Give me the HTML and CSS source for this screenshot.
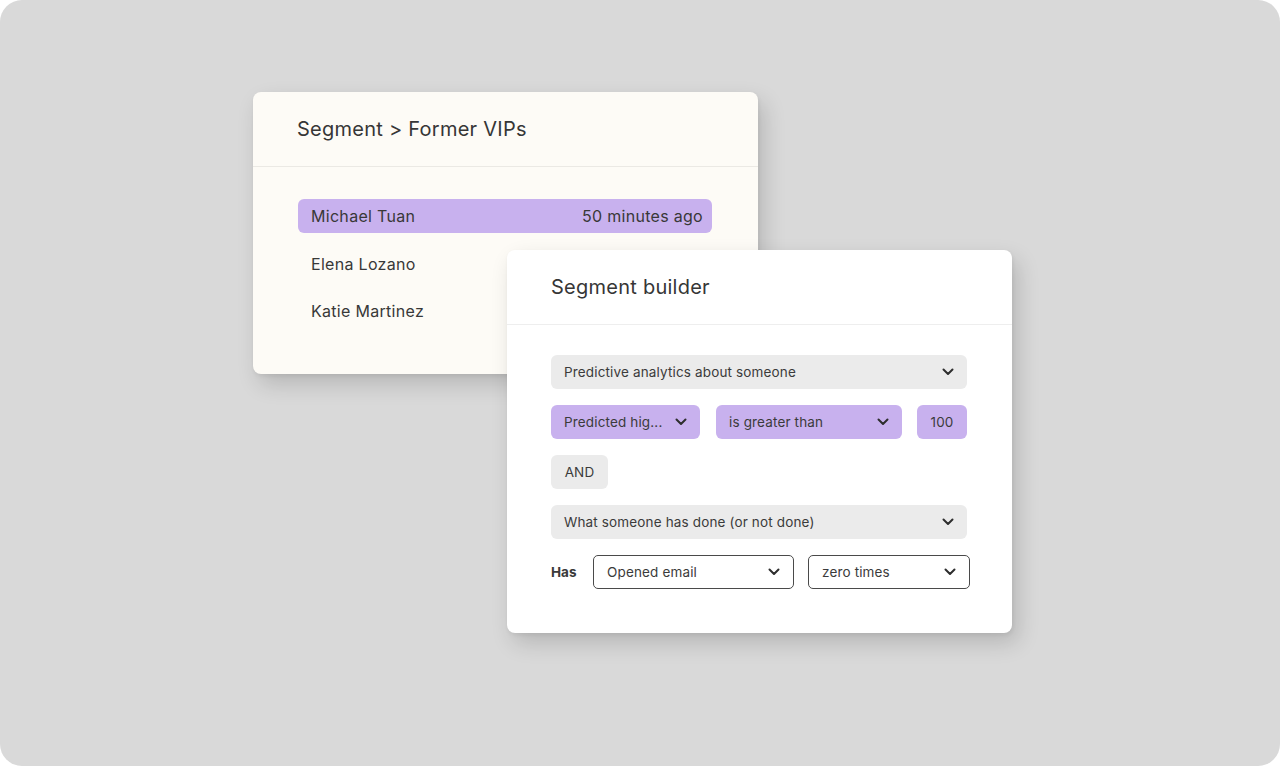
FILE: index.html
```html
<!DOCTYPE html>
<html lang="en">
<head>
<meta charset="utf-8">
<title>Segment builder</title>
<link rel="stylesheet" href="styles.css">
</head>
<body>
<div class="stage">
  <section class="card card-list">
    <header class="card-head">Segment &gt; Former VIPs</header>
    <ul class="people">
      <li class="person active"><span>Michael Tuan</span><span>50 minutes ago</span></li>
      <li class="person"><span>Elena Lozano</span></li>
      <li class="person"><span>Katie Martinez</span></li>
    </ul>
  </section>

  <section class="card card-builder">
    <header class="card-head">Segment builder</header>
    <div class="builder">
      <div class="field gray full"><span>Predictive analytics about someone</span><svg class="chev" viewBox="0 0 12 8"><path d="M1.5 1.5l4.5 4.5 4.5-4.5"/></svg></div>
      <div class="row">
        <div class="field purple w149"><span>Predicted hig...</span><svg class="chev" viewBox="0 0 12 8"><path d="M1.5 1.5l4.5 4.5 4.5-4.5"/></svg></div>
        <div class="field purple w186"><span>is greater than</span><svg class="chev" viewBox="0 0 12 8"><path d="M1.5 1.5l4.5 4.5 4.5-4.5"/></svg></div>
        <div class="field purple num"><span>100</span></div>
      </div>
      <div class="field gray and"><span>AND</span></div>
      <div class="field gray full"><span>What someone has done (or not done)</span><svg class="chev" viewBox="0 0 12 8"><path d="M1.5 1.5l4.5 4.5 4.5-4.5"/></svg></div>
      <div class="row has-row">
        <span class="has">Has</span>
        <div class="field outline w200"><span>Opened email</span><svg class="chev" viewBox="0 0 12 8"><path d="M1.5 1.5l4.5 4.5 4.5-4.5"/></svg></div>
        <div class="field outline w162"><span>zero times</span><svg class="chev" viewBox="0 0 12 8"><path d="M1.5 1.5l4.5 4.5 4.5-4.5"/></svg></div>
      </div>
    </div>
  </section>
</div>
</body>
</html>
```

FILE: styles.css
```css
* { box-sizing: border-box; }
html, body { margin: 0; padding: 0; background: #ffffff; }
body {
  font-family: Inter, "Noto Sans", "Liberation Sans", sans-serif;
  color: #353535;
}
.stage {
  position: relative;
  width: 1280px;
  height: 766px;
  background: #d9d9d9;
  border-radius: 22px;
  overflow: hidden;
}
.card {
  position: absolute;
  width: 505px;
  border-radius: 8px;
  box-shadow: 6px 10px 22px rgba(0, 0, 0, 0.16), 1px 2px 4px rgba(0, 0, 0, 0.06);
  display: flex;
  flex-direction: column;
}
.card-list {
  left: 253px;
  top: 92px;
  height: 282px;
  background: #fdfbf6;
}
.card-builder {
  left: 507px;
  top: 250px;
  height: 383px;
  background: #ffffff;
}
.card-head {
  height: 75px;
  display: flex;
  align-items: center;
  padding-left: 44px;
  font-size: 20px;
  letter-spacing: 0.25px;
  color: #363636;
  border-bottom: 1px solid #ebe9e4;
}
.card-builder .card-head { border-bottom-color: #eeeeee; }
.people {
  list-style: none;
  margin: 0;
  padding: 32px 0 0 45px;
  display: flex;
  flex-direction: column;
  gap: 13.5px;
}
.person {
  width: 414px;
  height: 34px;
  border-radius: 6px;
  display: flex;
  align-items: center;
  justify-content: space-between;
  padding: 0 9px 0 13px;
  font-size: 16px;
  letter-spacing: 0.3px;
  color: #383838;
}
.person.active { background: #c8b1ee; }
.builder {
  padding: 30px 0 0 44px;
  display: flex;
  flex-direction: column;
  gap: 16px;
}
.row {
  display: flex;
  align-items: center;
  gap: 15px;
}
.row .w186 { margin-left: 1px; }
.field {
  height: 34px;
  border-radius: 6px;
  display: flex;
  align-items: center;
  justify-content: space-between;
  padding: 0 13px;
  font-size: 13.5px;
  letter-spacing: 0.15px;
  color: #3b3b3b;
}
.gray { background: #ebebeb; }
.purple { background: #c8b1ee; }
.full { width: 416px; }
.w149 { width: 149px; }
.w186 { width: 186px; }
.num { width: 50px; justify-content: center; padding: 0; }
.and { width: 57px; justify-content: center; padding: 0; }
.outline {
  background: #ffffff;
  border: 1.5px solid #4a4a4a;
  border-radius: 5px;
  height: 34px;
}
.w200 { width: 201px; }
.w162 { width: 162px; }
.has-row { gap: 0; }
.has {
  font-size: 13.5px;
  font-weight: 700;
  color: #3a3a3a;
  width: 42px;
}
.has-row .w162 { margin-left: 14px; }
.chev {
  width: 12px;
  height: 8px;
  flex: none;
}
.chev path {
  fill: none;
  stroke: #2e2e2e;
  stroke-width: 2;
  stroke-linecap: round;
  stroke-linejoin: round;
}
```
